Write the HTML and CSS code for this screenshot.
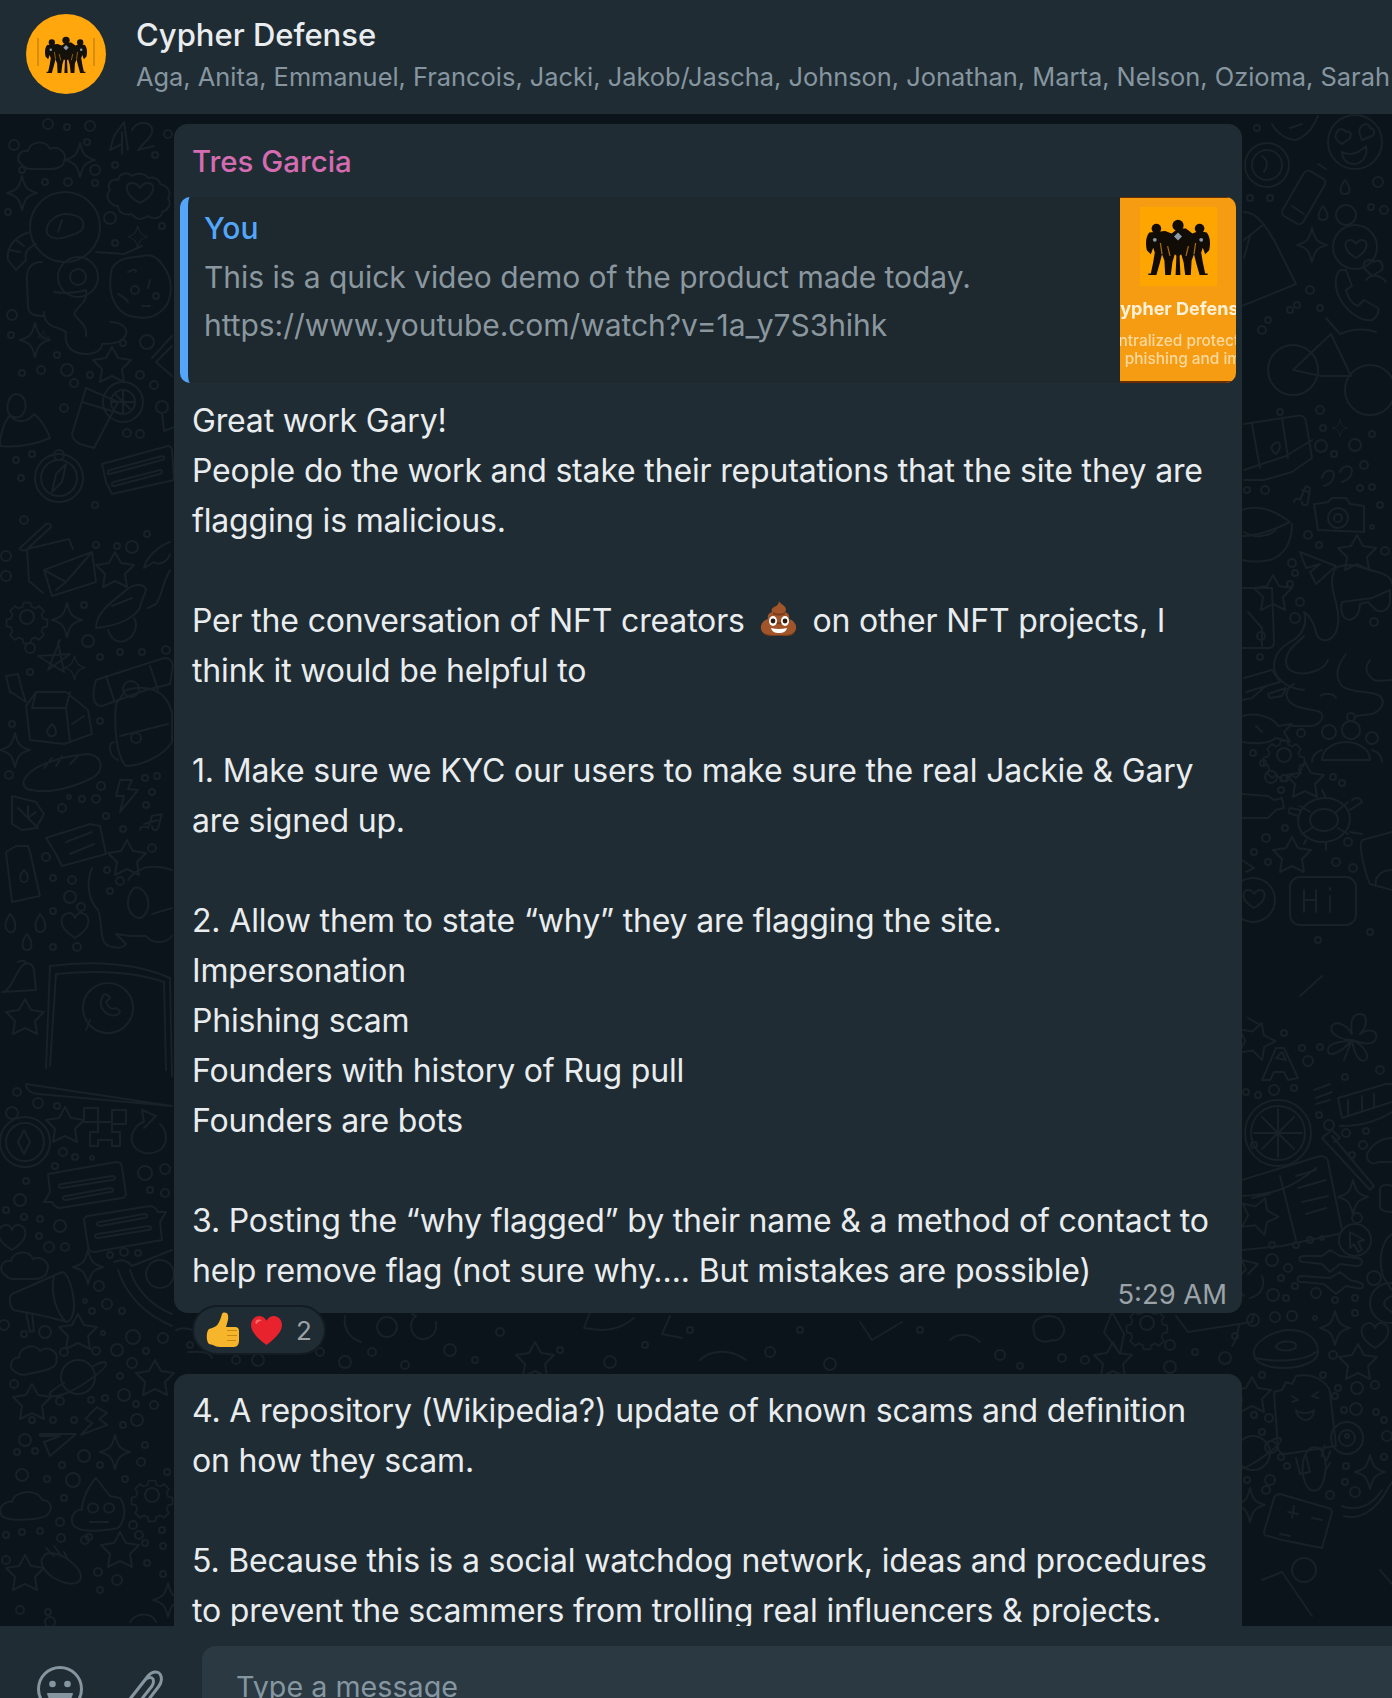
FILE: index.html
```html
<!DOCTYPE html>
<html lang="en">
<head>
    <meta charset="UTF-8">
    <title>Cypher Defense</title>
    <link rel="stylesheet" href="styles.css">
</head>
<body>
    <svg class="sprites" width="0" height="0">
        <defs>
            <symbol id="figures" viewBox="0 0 80 70">
                <g stroke-linecap="round" stroke-linejoin="round">
                    <circle cx="40" cy="8" r="7"/>
                    <circle cx="13" cy="12" r="6"/>
                    <circle cx="67" cy="12" r="6"/>
                    <path d="M4 17c-4 5-5 13-3 22l5 5 3-8 2 6-2 12-3 14H3v2h10l4-14 3-12 3 8 1 18h7l2-16 3-10 2 2-1 24h6l-1-24 2-2 3 10 2 16h7l1-18 3-8 3 12 4 14h10v-2h-3l-3-14-2-12 2-6 3 8 5-5c2-9 1-17-3-22l-10-2-8 3-8-6-10 0-8 6-8-3z"/>
                </g>
                <path d="M40 17l5 5-5 5-5-5z" fill="#8d99a6"/>
                <circle cx="11" cy="26" r="2.400" fill="#8d99a6"/>
                <circle cx="69" cy="26" r="2.400" fill="#8d99a6"/>
                <path d="M27 34l3 12M53 34l-3 12M18 30l2 14M62 30l-2 14" stroke="#a8690f" stroke-width="1.600" fill="none"/>
            </symbol>
        </defs>
    </svg>

    <div class="app">
        <header class="chat-header">
            <div class="avatar">
                <svg class="avatar-logo" viewBox="0 0 80 80">
                    <rect x="11" y="24" width="2" height="28" fill="#b97a10" opacity="0.6"/>
                    <rect x="67" y="24" width="2" height="28" fill="#b97a10" opacity="0.6"/>
                    <svg x="19" y="22" width="42" height="37"><use href="#figures"/></svg>
                </svg>
            </div>
            <div class="chat-info">
                <div class="chat-title">Cypher Defense</div>
                <div class="chat-members">Aga, Anita, Emmanuel, Francois, Jacki, Jakob/Jascha, Johnson, Jonathan, Marta, Nelson, Ozioma, Sarah</div>
            </div>
        </header>

        <main class="chat-body">
            <!-- wallpaper doodles, coordinates are page coordinates -->
            <svg class="wallpaper" width="1392" height="1512" viewBox="0 114 1392 1512">
                <defs>
                    <path id="star4" d="M0-17C3-5 5-3 15 0 5 3 3 5 0 17-3 5-5 3-15 0-5-3-3-5 0-17z"/>
                    <path id="star5" d="M0-18l6 11 13 2-9 9 2 13-12-6-12 6 2-13-9-9 13-2z"/>
                    <path id="heart" d="M0 13C-20 1-14-12-6-12c3 0 5 2 6 5 1-3 3-5 6-5 8 0 14 13-6 25z"/>
                    <path id="cloud" d="M-22 8c-8-6-2-16 6-14 2-10 18-12 22-2 8-4 18 4 14 12 0 6-8 8-14 8H-14c-4 0-6-2-8-4z"/>
                    <g id="gear">
                        <circle r="7"/>
                        <path d="M-4-17h8l1 5 5 2 4-3 6 6-3 4 2 5 5 1v8l-5 1-2 5 3 4-6 6-4-3-5 2-1 5h-8l-1-5-5-2-4 3-6-6 3-4-2-5-5-1v-8l5-1 2-5-3-4 6-6 4 3 5-2z" transform="scale(.85)"/>
                    </g>
                    <g id="bolt"><path d="M6-16h-12l-4 16 8 0-4 16 18-22-10-1z"/></g>
                    <g id="comet">
                        <path d="M-20-10c-6 6 0 16 10 22 10 6 22 8 26 2 4-8-6-16-14-22-8-4-18-8-22-2z"/>
                        <path d="M-10-10l-8-8M-4-12l-6-8M4-6l-4-8"/>
                    </g>
                    <g id="saturn">
                        <circle r="17"/>
                        <path d="M-14 6c-10 6-16 10-14 12 4 4 20-2 32-10S30-10 28-14c-2-2-8 0-14 4"/>
                    </g>
                    <g id="chatline">
                        <path d="M-38-14l68-12c4 0 6 2 6 6l4 26c0 2-2 4-4 4l-62 10c-4 0-6-2-8-6l-8 0 6-10z"/>
                        <path d="M-24-4l50-8c4 0 4 4 0 4l-50 8c-4 0-4-4 0-4zM-20 8l44-8c4 0 4 4 0 4l-44 8c-4 0-4-4 0-4z"/>
                    </g>
                </defs>

                <g class="doodle">
                    <!-- left column, helmet and food -->
                    <path d="M122 144l-12 6 4-14 10-14 4 28M122 132l0 22M132 130c4-8 16-10 20-2 2 8-8 14-14 22l16-4"/>
                    <use href="#cloud" x="44" y="157"/>
                    <use href="#star4" x="80" y="160"/>
                    <use href="#star4" x="22" y="193"/>
                    <path d="M110 190c-4-6 2-12 8-10 2-8 10-8 14-4 6-4 14-2 16 2 6-2 12 2 12 6 8 2 12 8 8 14 4 6 0 12-6 14 0 6-8 8-14 4-6 4-12 4-16-2-8 2-14-2-14-8-8 0-14-10-8-16z"/>
                    <path d="M140 203c-16-8-16-20-8-20 3 0 6 2 8 5 2-3 5-5 8-5 8 0 8 12-8 20z"/>
                    <use href="#star4" x="138" y="235" transform="translate(48 84) scale(.65)"/>

                    <circle cx="65" cy="227" r="35"/>
                    <path d="M47 233c-2-12 12-22 26-18 12 2 14 14 4 18-10 4-24 10-30 0zM62 220l-4 12"/>
                    <path d="M30 232c-14 4-24 14-22 28l8 10 10-10c-2-8 2-12 10-16M16 240l8 6M10 250l10 2"/>
                    <path d="M42 262c-12 0-16 8-15 20l1 24c0 8 6 10 16 10M54 292c12 2 26 0 32-2 2 14-8 14-12 24 4 6 14 12 12 22"/>
                    <circle cx="78" cy="277" r="20"/>
                    <circle cx="78" cy="277" r="8"/>
                    <path d="M44 312c0 8 4 14 14 16l8 4c-2 12 4 22 20 22 12 0 16-6 16-10 10 0 22-2 24-10 2-8-8-12-16-12M96 252l28 2 18-8"/>
                    <path d="M112 268c8-12 20-10 30-12 14-4 20 8 24 14 8 14 6 34-6 42-10 8-20 6-30 4-14-4-24-22-18-48z"/>
                    <path d="M128 272c4-2 8-4 8 0M150 280l-2 8M118 294c4 2 8 4 10 8M142 306h8"/>
                    <circle cx="135" cy="290" r="4"/>
                    <circle cx="156" cy="296" r="3"/>
                    <use href="#star4" x="35" y="340"/>
                    <use href="#star5" x="112" y="365"/>
                    <path d="M152 358l20-22M172 376l-16-14 16-16"/>

                    <!-- drink and person -->
                    <path d="M86 388l-14 46c0 4 4 8 8 10l14 4 24-46zM82 402l40 12"/>
                    <circle cx="123" cy="402" r="20"/>
                    <circle cx="123" cy="402" r="12"/>
                    <path d="M123 390v24M111 402h24M115 394l16 16"/>
                    <path d="M8 412c-2-8 2-18 8-18 8 0 12 10 8 18-2 6-12 8-16 0zM0 440c2-10 6-22 10-24 8 8 18 6 24-2 8 6 14 18 16 24-14 6-32 10-50 8z"/>
                    <use href="#star4" x="44" y="398" transform="translate(26 178) scale(.4)"/>
                    <circle cx="162" cy="407" r="6"/>
                    <path d="M162 413l2 18 10-4"/>

                    <!-- compass and ticket -->
                    <circle cx="59" cy="478" r="24"/>
                    <circle cx="59" cy="478" r="18"/>
                    <circle cx="59" cy="455" r="5"/>
                    <path d="M66 464l-4 18-10 10 4-18zM52 492l10-10"/>
                    <path d="M102 464l66-18c2 0 4 2 4 4l2 30-62 14-6-12zM110 470l52-14c3 0 3 3 0 4l-52 14c-3 0-3-3 0-4zM114 482l46-12c3 0 3 3 0 4l-46 12c-3 0-3-3 0-4z"/>

                    <!-- paperclip and envelope -->
                    <path d="M20 548l26-24c4-2 6 2 4 4l-24 22c-4 2-8-2-6-2z"/>
                    <path d="M43 593l-14-12-2-32 42-10 4 10"/>
                    <path d="M44 570l48-18 4 30-44 14zM44 570l22 12 26-30M56 590l10-8"/>
                    <use href="#star5" x="115" y="570"/>
                    <use href="#gear" x="27" y="617"/>
                    <use href="#star4" x="67" y="620"/>
                    <path d="M96 628c0-16 16-26 28-36 8-8 20-10 22-2-2 8-6 12-6 18-8 12-26 18-44 20zM112 606l20-8M108 630c4 12 14 16 24 6 4-6 6-12 2-18M170 542c-12 4-24 16-26 26l10-6c4 4 14 0 16-8"/>
                    <path d="M170 570c-8 14-8 26-14 34l-8 4"/>

                    <!-- small left items -->
                    <path d="M60 640l-12 30 22-16-32 2 26 16-6-30z"/>
                    <use href="#star4" x="75" y="668" transform="translate(22 200) scale(.7)"/>
                    <path d="M6 676l12-2 4 16 4 12-12-8-4-2z"/>
                    <path d="M36 692h30l22 18 4 24-28 10-34-4-4-34zM36 692l-4 16 34 0 4-16M66 708l4 34M52 724c-4 4-6 8-4 10 2 4 8 2 8-2s-2-6-4-8zM72 724l12-8"/>
                    <path d="M126 690c22-6 40 0 46 22v30c-10 16-34 24-46 24-10-10-12-40-10-62zM114 742c-6 0-6 14 4 18M120 736l48-12"/>
                    <circle cx="136" cy="738" r="5"/>
                    <path d="M96 680l68-22c8 0 10 6 8 14l-2 12-24 6-44 16c-10 0-10-12-6-26zM150 666l8 24M106 676l8 24"/>
                    <circle cx="131" cy="689" r="8"/>
                    <use href="#star4" x="15" y="750"/>
                    <path d="M24 780c8-16 40-24 64-26 16 2 16 18 4 24-20 10-44 16-60 12-6 0-10-4-8-10zM44 768l8-10M56 766l6-10M70 764l8-8"/>
                    <use href="#bolt" x="126" y="796"/>
                    <path d="M12 796l24 6 8 12-8 14-14 2-10-6zM18 808l20 20M28 806v10M36 812l-8 6"/>
                    <path d="M140 830c0-4 6-4 8-2l4-12 10-2-4 14c-2 4-6 2-6-2M144 824l14-4"/>
                    <path d="M46 838l44-14 10 2 6 28-44 12-6-12zM66 842l26-10M70 854l24-10"/>
                    <path d="M16 846h12l2 6 10 44-28 6-6-50zM24 870c-6 6-4 12 0 12s6-6 0-12z"/>
                    <use href="#star5" x="127" y="858"/>

                    <!-- dog -->
                    <path d="M92 868c-6 14-4 32 6 42 4 10 2 24 6 32 4 6 18 8 22 2l-10-10 14 2 16 0c6 8 20 8 26 0M128 880c10-14 26-16 44-10M134 888c-6 6-10 20 0 28 8 6 16-4 14-16-2-10-10-14-14-12zM152 914l20-6"/>
                    <path d="M10 914c-6 8-6 16 0 18s8-10 0-18zM40 914c-6 8-6 18 0 18 6 0 8-8 0-18zM27 934c-6 8-6 16 0 16 6 0 6-8 0-16z"/>
                    <use href="#heart" x="75" y="925"/>
                    <path d="M4 992c8-4 12-20 18-26 4-4 10-4 12 4l2 20-34 2zM18 962c2-2 8-2 8 2"/>
                    <use href="#star5" x="25" y="1017"/>

                    <!-- tablet with phone logo -->
                    <path d="M50 966c44-6 90-2 120 12l2 98M50 966l-4 102M56 974c40-4 80-2 108 8l2 88M56 974l-6 92"/>
                    <circle cx="108" cy="1008" r="25"/>
                    <path d="M86 1030l4-10M102 998c2-6 6-4 8 0l-4 4c2 6 6 8 10 6l4 3c-2 6-10 6-16 0-4-4-4-8-2-13z"/>
                    <path d="M26 1084l146 22M26 1084c0 6 6 10 12 10l134 12"/>

                    <!-- compass and pixel creature -->
                    <circle cx="25" cy="1142" r="25"/>
                    <circle cx="25" cy="1142" r="19"/>
                    <circle cx="12" cy="1113" r="6"/>
                    <path d="M24 1130l6 12-6 12-6-12z"/>
                    <use href="#star5" x="65" y="1125"/>
                    <path d="M84 1108h14v14H84zM112 1110h14v14h-14zM98 1122h14v10h8v14h-8v-6H98v6h-8v-14h8z"/>
                    <path d="M160 1124c8 8 8 20 0 26-10 6-24 4-28-8-2-8 4-18 12-20l-2-12 14 6-12 12"/>
                    <use href="#chatline" x="86" y="1188"/>
                    <use href="#chatline" x="124" y="1226" transform="translate(248 2452) scale(-1 -1)"/>
                    <use href="#heart" x="12" y="1237"/>
                    <use href="#cloud" x="27" y="1267"/>
                    <use href="#star4" x="88" y="1267"/>

                    <!-- megaphone and pizza -->
                    <path d="M12 1294l50-22c6 0 12 20 12 34 0 10-4 16-8 16-10-4-34-8-52-12-4-2-6-12-2-16zM54 1276c-4 16 2 36 12 46M26 1312l4 20 4-1-2-18"/>
                    <path d="M114 1262c10-4 14 0 18 4l40-16M118 1270c8 24 26 44 54 56M130 1270c6 20 22 36 42 44"/>
                    <circle cx="160" cy="1274" r="14"/>
                    <use href="#star5" x="78" y="1332"/>
                    <use href="#cloud" x="36" y="1360" transform="rotate(-12 36 1360)"/>
                    <use href="#saturn" x="78" y="1377"/>
                    <use href="#star5" x="32" y="1402"/>
                    <use href="#star5" x="155" y="1378"/>
                    <use href="#bolt" x="94" y="1424" transform="rotate(30 94 1424)"/>
                    <path d="M40 1434l36 0-26 22-6-14 16-6-20 0z"/>
                    <use href="#star4" x="115" y="1452"/>
                    <path d="M2 1516c-6-10 6-16 10-14 2-12 26-14 30-2 8 0 12 8 6 14-4 6-40 8-46 2z"/>
                    <path d="M96 1478l14 18 10 2c6 8 6 22-2 30-20 4-38 4-44-2-6-8 2-18 8-16 0-12 8-26 14-32zM88 1508c0-6 10-6 10 0s-10 6-10 0zM104 1508c0-6 10-6 10 0s-10 6-10 0zM90 1522l18 0"/>
                    <use href="#gear" x="152" y="1495"/>
                    <use href="#star5" x="120" y="1550"/>
                    <use href="#star5" x="25" y="1573"/>
                    <use href="#comet" x="64" y="1566"/>
                    <use href="#star4" x="168" y="1600"/>
                    <path d="M130 1622c6-10 22-10 26 0"/>

                    <!-- gap between the two bubbles -->
                    <path d="M176 1330c12-6 26 4 34 12M188 1352c8 0 20-2 24 6"/>
                    <circle cx="387" cy="1327" r="10"/>
                    <path d="M345 1316c-2 12 4 22 16 26M590 1312l-6 16c14 2 30 6 50-10"/>
                    <path d="M436 1322c2 12-8 20-18 16-10-6-8-18-2-22l-4-2"/>
                    <path d="M700 1360c10-10 30-12 46 0M670 1316l-8 18 20 4"/>
                    <use href="#star5" x="535" y="1360"/>
                    <use href="#star5" x="1113" y="1360"/>
                    <use href="#gear" x="1147" y="1323"/>
                    <path d="M1040 1318c8-4 20-2 22 6 6 8-2 18-10 16-8 4-18 0-18-8-2-6 0-12 6-14zM1112 1312l-8 20 16 22 4-20zM1176 1316l12 16 64-10 2-8"/>
                    <path d="M1240 1324c-4 6 0 12-8 22"/>
                    <path d="M860 1322l12 18 30-18M950 1340c8-8 22-6 30 2"/>

                    <!-- right column, top -->
                    <circle cx="1267" cy="165" r="22"/>
                    <circle cx="1267" cy="165" r="15"/>
                    <path d="M1262 156c6 4 6 10 2 16"/>
                    <path d="M1272 124c4 8 14 16 24 16 10-4 16-10 22-24M1290 128l12-4"/>
                    <circle cx="1355" cy="142" r="27"/>
                    <path d="M1336 134c2-6 8-6 10-2 4-2 6 2 4 6l-8 6c-4-2-8-6-6-10zM1360 128c4-6 10-4 10 0 4 0 6 6 2 8l-10 4c-2-4-4-8-2-12zM1342 152c8 4 16 2 24-6 2 10-4 18-12 18-8 0-12-6-12-12z"/>
                    <rect x="1292" y="172" width="24" height="52" rx="5" transform="rotate(30 1305 197)"/>
                    <path d="M1318 164l8 5M1304 214l-12-8"/>
                    <path d="M1345 180c-6 8-6 14 0 14s6-6 0-14zM1323 206c-6 8-6 14 0 14s6-6 0-14z"/>
                    <circle cx="1346" cy="215" r="10"/>
                    <use href="#star4" x="1312" y="245"/>
                    <circle cx="1355" cy="247" r="22"/>
                    <path d="M1356 258c-14-8-12-18-6-18 3 0 5 2 6 4 2-3 4-4 6-4 6 0 8 10-6 18z"/>
                    <path d="M1244 212c10 0 18 8 30 28l22 44-54 22M1244 240l20-16M1250 236l-6 22"/>
                    <path d="M1340 270c-6 6-6 20 2 32 6 10 20 20 30 18 4-2 8-8 6-12l-14-8-6 6c-6-2-10-8-12-16l6-4-6-16zM1366 280c4-6 14-6 20 2M1364 268c-2-8 6-10 10-6 6-4 10 2 8 8l-10 6z"/>
                    <circle cx="1293" cy="370" r="25"/>
                    <circle cx="1370" cy="390" r="25"/>
                    <path d="M1293 370l38-36 20 42h-30l-28-6zM1326 318l14 16c10-4 24-6 36-2"/>

                    <!-- right column, map to plane -->
                    <path d="M1244 424l52-8c6-2 10 2 10 6l6 36-20 14-28 8-20 0M1252 424l8 44M1282 418l6 40M1244 470l42-14 26-16"/>
                    <path d="M1272 446c4-6 8-4 8 0 0 4-4 8-4 8s-6-4-4-8z"/>
                    <use href="#star4" x="1340" y="428" transform="translate(670 214) scale(.5)"/>
                    <path d="M1322 478c2-8 10-10 12-4 0 6-4 10-10 12M1340 472c2-6 10-8 12-2 0 6-4 10-10 12"/>
                    <path d="M1294 502c0-4 6-4 6-2l6-14 4 2-2 14c0 4-6 4-6 0M1302 490l6 2"/>
                    <path d="M1242 510c16-6 32 0 48 12-16 8-34 14-48 14M1292 524c0 18-8 32-22 36-10 2-20 2-28 0"/>
                    <path d="M1244 532c10 6 22 6 32-2"/>
                    <path d="M1316 504l12-2 4-4h14l4 6 14 2v26l-46-2-4-26z"/>
                    <circle cx="1338" cy="518" r="10"/>
                    <circle cx="1338" cy="518" r="4"/>
                    <use href="#star5" x="1357" y="553"/>
                    <path d="M1300 552l36 14-20 18-6-12 10-8-14 4z"/>

                    <!-- wand, creature and glasses -->
                    <use href="#star5" x="1273" y="593"/>
                    <path d="M1242 588h30l2 54c0 4-2 6-6 6h-26M1248 612l14 16 0 18"/>
                    <circle cx="1261" cy="636" r="4"/>
                    <path d="M1336 568c10-6 22-2 34 2 10 2 22 6 22 14M1336 568c-6 8-4 22 0 34 2 10 4 20 0 30-6 12-18 10-20 0-2-10-8-18-12-20 4 12-2 24-14 30-10 6-16 14-16 24 0 10 10 22 30 24"/>
                    <path d="M1304 636c-8 8-18 14-18 26 0 10 14 14 26 10 8-2 14-6 16-12"/>
                    <path d="M1342 602l30-4 18-8v10c0 8-6 14-14 10l-8-8-8 2c0 10-4 14-10 16-8 0-10-10-8-18z"/>
                    <path d="M1346 654c-8 10-12 22-4 32 10 8 30 4 38 10 6 6 2 14-8 18l-16 2M1370 660c-6 8-4 14 4 20 6 2 14 0 18 0"/>
                    <path d="M1294 684c-8 4-10 12-4 18 8 8 20 6 30 10 6 4 0 14-10 14l-18 0M1320 696c6-4 14-2 16 2"/>
                    <path d="M1244 678l28-8 8 12-14 4-14 12-10 2M1246 692l20-6M1268 694l12-4 6-2-4 8-12 2z"/>
                    <path d="M1242 716c12-4 30 0 36 10l14-2-8 8 6 10-14-4c-8 6-22 6-34 4M1256 726l6 6"/>
                    <path d="M1322 732a7 7 0 1 1 0 .1M1366 738a6 6 0 1 1 0 .1M1342 730a9 9 0 1 1 0 .1M1322 760c0-12 14-18 24-18s24 6 24 18zM1312 762c0-6 4-10 10-12M1382 762c0-6-4-10-10-12"/>
                    <use href="#gear" x="1284" y="755"/>
                    <use href="#star5" x="1305" y="780"/>

                    <!-- turtle, note, smile -->
                    <ellipse cx="1324" cy="820" rx="26" ry="22" transform="rotate(-8 1324 820)"/>
                    <ellipse cx="1324" cy="820" rx="14" ry="11"/>
                    <path d="M1300 810l-10-2c-2 2-2 6 2 6l6 2M1350 810l12-8c-2-6-8-4-10-2M1326 798l-4-8M1350 832l12 2M1306 840l-2 4M1326 842l0 8M1310 812l-10-6M1336 812l12-10M1312 828l-10 6M1338 828l10 6"/>
                    <path d="M1242 794l26 2 6 4 8-2 2 10-8 2-8 8-26 0"/>
                    <path d="M1362 840l30-8M1362 840c-4 6 4 36 8 44l22 6"/>
                    <path d="M1392 870c-12 0-18 8-16 16"/>
                    <use href="#star5" x="1292" y="855"/>
                    <path d="M1242 860l12 8-8 4"/>
                    <rect x="1290" y="877" width="66" height="48" rx="10"/>
                    <path d="M1304 890v22M1316 890v22M1304 900h12M1330 896v16M1330 888v2"/>
                    <circle cx="1253" cy="900" r="22"/>
                    <path d="M1254 908c-14-8-12-18-6-18 3 0 5 2 6 4 2-3 4-4 6-4 6 0 8 10-6 18z"/>

                    <!-- right column, lower part -->
                    <use href="#star5" x="1256" y="1040" transform="rotate(18 1256 1040)"/>
                    <path d="M1248 1018l14 8M1300 996l22-20M1262 1080l14-32 8 0 14 30-10 2-4-8-10 0-4 8zM1276 1058l6-6 4 8z"/>
                    <path d="M1344 1060l8-20M1352 1040c-10 0-24-6-20-14 4-6 14-2 20 8-2-12 0-20 8-20 8 0 8 12 0 20 8-6 18-4 16 4-2 8-12 6-24 2zM1352 1040c-10 2-24 2-24 10 0 8 12 4 24-10zM1352 1040c10 4 18 14 14 20-6 4-12-6-14-20z"/>
                    <circle cx="1278" cy="1133" r="33"/>
                    <circle cx="1278" cy="1133" r="27"/>
                    <path d="M1278 1133v-24M1278 1133v24M1278 1133h-24M1278 1133h24M1278 1133l-16-16M1278 1133l16-16M1278 1133l-16 16M1278 1133l16 16"/>
                    <path d="M1314 1090l16-6M1316 1098l16-6M1316 1104l14-4"/>
                    <path d="M1338 1098l48-14h6M1338 1098l4 20 50-16M1340 1126c16 0 36-4 52-14M1348 1100v14M1362 1096v14M1374 1094v14"/>
                    <path d="M1322 1138l48 52 4-4-42-50M1322 1138l10-8 8 8-6 4"/>
                    <path d="M1392 1138c-12 0-20 8-24 14-4 8 4 14 10 10l14 0"/>
                    <path d="M1392 1186c-4-2-12-2-12 4v16c0 6 8 6 12 6"/>

                    <path d="M1242 1180l78-24c4 0 8 2 8 6l14 68c0 2-2 4-4 4l-56 12-40 4M1280 1176l16 64M1242 1196c30-2 48-6 74-28M1252 1198l18-4M1296 1176l20-6M1298 1188l28-8M1302 1202l26-6M1306 1214l20-6"/>
                    <use href="#star5" x="1259" y="1215" transform="rotate(20 1259 1215)"/>
                    <use href="#star4" x="1353" y="1197"/>
                    <circle cx="1355" cy="1240" r="16"/>
                    <path d="M1350 1232l14 8-6 2 4 8-4 2-4-8-4 4z"/>
                    <path d="M1304 1256l18 0 8-6 10 6 16 2c8 0 8 8 0 8l-16-2-10 8-8-8-18-2c-6 0-6-6 0-6zM1302 1276l28 2 10-6 10 8 8 2c8 2 6 8-2 6l-10-2-10 8-12-10-22-2c-6 0-6-6 0-6z"/>
                    <path d="M1244 1296c-8-6-6-22 2-26l-4-10 16 4-10 10M1262 1276c4 10-2 20-12 22"/>
                    <path d="M1392 1234c-12 8-14 30-8 44 4 6 6 10 8 12"/>
                    <circle cx="1390" cy="1303" r="20"/>
                    <path d="M1392 1296c-6 2-8 6-8 8s4 6 8 8"/>
                    <use href="#star4" x="1335" y="1328"/>
                    <path d="M1254 1354c-2-12 20-24 36-24 18 0 28 10 28 22 0 10-18 16-34 16-14 0-30-4-30-14zM1256 1358c16 4 48 4 60-6M1276 1346c4-6 20-6 20 0 0 6-20 6-20 0z"/>
                    <use href="#heart" x="1375" y="1335"/>
                    <use href="#star5" x="1358" y="1362"/>
                    <use href="#star5" x="1252" y="1395"/>

                    <!-- popsicle, eye, saturn -->
                    <path d="M1274 1392l8-2 4-8 6 2 4-8c20-4 32 8 34 16l6 54-50 8c-4 0-8-2-8-6zM1296 1458l4 16 10-2-4-16"/>
                    <path d="M1292 1396l6 4-6 2M1318 1392l-6 4 6 2M1296 1410c4 4 14 4 18 0 0 6-4 10-8 10s-10-4-10-10z"/>
                    <circle cx="1347" cy="1438" r="16"/>
                    <circle cx="1347" cy="1438" r="8"/>
                    <circle cx="1347" cy="1436" r="2"/>
                    <use href="#saturn" x="1253" y="1453"/>
                    <use href="#comet" x="1318" y="1470" transform="rotate(60 1318 1470)"/>
                    <use href="#star4" x="1370" y="1472"/>
                    <path d="M1344 1516c14 4 32-4 44-28l4-6M1342 1506c14 6 30 0 40-16"/>
                    <use href="#star4" x="1250" y="1505"/>
                    <path d="M1280 1494l48 14c2 0 4 2 4 4l-10 36-40-8-14-4c-4 0-4-2-4-4l10-34c0-2 4-4 6-4zM1288 1512l10 2M1294 1506l-2 12M1312 1518l10 2M1280 1534l10 2"/>
                    <circle cx="1304" cy="1570" r="12"/>
                    <path d="M1262 1580l20-8 30 44M1380 1570l12 14"/>
                </g>

                <!-- scattered dots -->
                <g class="doodle">
                    <circle cx="48" cy="124" r="5"/><circle cx="67" cy="127" r="3"/><circle cx="90" cy="126" r="5"/>
                    <circle cx="14" cy="145" r="5"/><circle cx="87" cy="142" r="3"/><circle cx="22" cy="170" r="3"/>
                    <circle cx="45" cy="182" r="3"/><circle cx="68" cy="182" r="4"/><circle cx="95" cy="170" r="5"/>
                    <circle cx="95" cy="183" r="3"/><circle cx="115" cy="165" r="3"/><circle cx="155" cy="155" r="3"/>
                    <circle cx="168" cy="134" r="4"/><circle cx="8" cy="212" r="3"/><circle cx="110" cy="218" r="6"/>
                    <circle cx="115" cy="243" r="3"/><circle cx="162" cy="226" r="3"/><circle cx="12" cy="315" r="5"/>
                    <circle cx="11" cy="335" r="3"/><circle cx="147" cy="342" r="7"/><circle cx="123" cy="343" r="3"/>
                    <circle cx="57" cy="355" r="3"/><circle cx="22" cy="373" r="3"/><circle cx="41" cy="370" r="4"/>
                    <circle cx="67" cy="370" r="6"/><circle cx="90" cy="375" r="3"/><circle cx="74" cy="383" r="4"/>
                    <circle cx="140" cy="375" r="4"/><circle cx="154" cy="385" r="4"/><circle cx="64" cy="408" r="4"/>
                    <circle cx="127" cy="433" r="4"/><circle cx="140" cy="434" r="4"/><circle cx="16" cy="460" r="3"/>
                    <circle cx="32" cy="454" r="3"/><circle cx="21" cy="478" r="3"/><circle cx="95" cy="505" r="3"/>
                    <circle cx="24" cy="520" r="4"/><circle cx="6" cy="556" r="5"/><circle cx="6" cy="576" r="5"/>
                    <circle cx="96" cy="545" r="3"/><circle cx="117" cy="546" r="3"/><circle cx="132" cy="547" r="6"/>
                    <circle cx="147" cy="534" r="3"/><circle cx="84" cy="605" r="3"/><circle cx="88" cy="641" r="6"/>
                    <circle cx="30" cy="648" r="5"/><circle cx="100" cy="657" r="3"/><circle cx="120" cy="652" r="3"/>
                    <circle cx="142" cy="652" r="3"/><circle cx="166" cy="650" r="4"/><circle cx="30" cy="672" r="3"/>
                    <circle cx="12" cy="724" r="3"/><circle cx="100" cy="721" r="3"/><circle cx="9" cy="775" r="4"/>
                    <circle cx="101" cy="786" r="4"/><circle cx="145" cy="778" r="3"/><circle cx="157" cy="776" r="3"/>
                    <circle cx="152" cy="792" r="3"/><circle cx="146" cy="805" r="3"/><circle cx="69" cy="797" r="2"/>
                    <circle cx="82" cy="799" r="3"/><circle cx="96" cy="799" r="4"/><circle cx="62" cy="808" r="4"/>
                    <circle cx="106" cy="816" r="3"/><circle cx="123" cy="829" r="3"/><circle cx="152" cy="848" r="4"/>
                    <circle cx="46" cy="857" r="4"/><circle cx="53" cy="878" r="3"/><circle cx="72" cy="880" r="4"/>
                    <circle cx="107" cy="870" r="3"/><circle cx="120" cy="881" r="4"/><circle cx="110" cy="891" r="3"/>
                    <circle cx="70" cy="897" r="6"/><circle cx="81" cy="907" r="4"/><circle cx="53" cy="911" r="3"/>
                    <circle cx="53" cy="947" r="3"/><circle cx="77" cy="947" r="4"/>
                    <circle cx="17" cy="1092" r="4"/><circle cx="38" cy="1103" r="5"/><circle cx="57" cy="1106" r="3"/>
                    <circle cx="63" cy="1152" r="4"/><circle cx="75" cy="1157" r="3"/><circle cx="92" cy="1158" r="2"/>
                    <circle cx="55" cy="1166" r="3"/><circle cx="145" cy="1173" r="7"/><circle cx="165" cy="1169" r="5"/>
                    <circle cx="150" cy="1190" r="3"/><circle cx="165" cy="1193" r="4"/><circle cx="26" cy="1181" r="3"/>
                    <circle cx="20" cy="1200" r="6"/><circle cx="6" cy="1210" r="3"/><circle cx="24" cy="1217" r="3"/>
                    <circle cx="40" cy="1219" r="3"/><circle cx="60" cy="1226" r="6"/><circle cx="39" cy="1236" r="3"/>
                    <circle cx="49" cy="1247" r="5"/><circle cx="65" cy="1247" r="4"/><circle cx="110" cy="1255" r="3"/>
                    <circle cx="124" cy="1252" r="4"/><circle cx="138" cy="1253" r="3"/><circle cx="99" cy="1286" r="5"/>
                    <circle cx="85" cy="1301" r="2"/><circle cx="92" cy="1311" r="3"/><circle cx="107" cy="1304" r="5"/>
                    <circle cx="122" cy="1311" r="3"/><circle cx="4" cy="1325" r="5"/><circle cx="24" cy="1334" r="3"/>
                    <circle cx="45" cy="1332" r="6"/><circle cx="103" cy="1333" r="2"/><circle cx="133" cy="1337" r="7"/>
                    <circle cx="163" cy="1338" r="5"/><circle cx="64" cy="1352" r="4"/><circle cx="96" cy="1351" r="4"/>
                    <circle cx="117" cy="1350" r="6"/><circle cx="146" cy="1351" r="3"/><circle cx="132" cy="1363" r="5"/>
                    <circle cx="120" cy="1376" r="3"/><circle cx="14" cy="1384" r="4"/><circle cx="60" cy="1401" r="4"/>
                    <circle cx="91" cy="1400" r="3"/><circle cx="105" cy="1398" r="3"/><circle cx="124" cy="1395" r="6"/>
                    <circle cx="136" cy="1404" r="3"/><circle cx="154" cy="1405" r="4"/><circle cx="137" cy="1420" r="6"/>
                    <circle cx="123" cy="1425" r="3"/><circle cx="32" cy="1420" r="3"/><circle cx="53" cy="1420" r="3"/>
                    <circle cx="74" cy="1420" r="3"/><circle cx="25" cy="1440" r="6"/><circle cx="17" cy="1452" r="3"/>
                    <circle cx="35" cy="1451" r="3"/><circle cx="145" cy="1445" r="3"/><circle cx="141" cy="1462" r="4"/>
                    <circle cx="84" cy="1456" r="6"/><circle cx="62" cy="1465" r="3"/><circle cx="100" cy="1465" r="3"/>
                    <circle cx="167" cy="1472" r="3"/><circle cx="22" cy="1475" r="6"/><circle cx="47" cy="1479" r="3"/>
                    <circle cx="73" cy="1480" r="7"/><circle cx="125" cy="1479" r="3"/><circle cx="64" cy="1498" r="3"/>
                    <circle cx="6" cy="1535" r="3"/><circle cx="22" cy="1532" r="3"/><circle cx="40" cy="1531" r="3"/>
                    <circle cx="60" cy="1522" r="4"/><circle cx="61" cy="1538" r="4"/><circle cx="89" cy="1537" r="3"/>
                    <circle cx="133" cy="1525" r="4"/><circle cx="139" cy="1535" r="4"/><circle cx="145" cy="1543" r="3"/>
                    <circle cx="162" cy="1530" r="3"/><circle cx="163" cy="1546" r="3"/><circle cx="6" cy="1560" r="4"/>
                    <circle cx="85" cy="1540" r="4"/><circle cx="98" cy="1572" r="4"/><circle cx="117" cy="1580" r="5"/>
                    <circle cx="147" cy="1563" r="3"/><circle cx="163" cy="1574" r="3"/><circle cx="100" cy="1590" r="3"/>
                    <circle cx="50" cy="1622" r="5"/><circle cx="48" cy="1612" r="3"/><circle cx="20" cy="1610" r="4"/>

                    <!-- gap dots -->
                    <circle cx="190" cy="1345" r="3"/><circle cx="236" cy="1360" r="4"/><circle cx="258" cy="1360" r="6"/>
                    <circle cx="290" cy="1335" r="3"/><circle cx="320" cy="1352" r="4"/><circle cx="345" cy="1362" r="6"/>
                    <circle cx="372" cy="1352" r="4"/><circle cx="405" cy="1365" r="4"/><circle cx="450" cy="1350" r="6"/>
                    <circle cx="475" cy="1360" r="3"/><circle cx="500" cy="1332" r="4"/><circle cx="560" cy="1350" r="3"/>
                    <circle cx="610" cy="1362" r="6"/><circle cx="645" cy="1345" r="3"/><circle cx="690" cy="1330" r="3"/>
                    <circle cx="770" cy="1352" r="5"/><circle cx="800" cy="1330" r="3"/><circle cx="830" cy="1364" r="6"/>
                    <circle cx="920" cy="1330" r="3"/><circle cx="1000" cy="1355" r="5"/><circle cx="1020" cy="1366" r="3"/>
                    <circle cx="1062" cy="1358" r="4"/><circle cx="1085" cy="1360" r="4"/><circle cx="1170" cy="1345" r="5"/>
                    <circle cx="1170" cy="1367" r="6"/><circle cx="1195" cy="1352" r="3"/><circle cx="1225" cy="1358" r="6"/>
                    <circle cx="1235" cy="1336" r="3"/>

                    <!-- right column dots -->
                    <circle cx="1257" cy="128" r="3"/><circle cx="1250" cy="198" r="3"/><circle cx="1270" cy="198" r="3"/>
                    <circle cx="1378" cy="182" r="5"/><circle cx="1371" cy="207" r="3"/><circle cx="1384" cy="210" r="4"/>
                    <circle cx="1310" cy="290" r="4"/><circle cx="1297" cy="305" r="3"/><circle cx="1320" cy="308" r="3"/>
                    <circle cx="1268" cy="320" r="3"/><circle cx="1290" cy="310" r="3"/><circle cx="1262" cy="330" r="4"/>
                    <circle cx="1280" cy="412" r="3"/><circle cx="1320" cy="410" r="4"/><circle cx="1323" cy="428" r="3"/>
                    <circle cx="1321" cy="446" r="6"/><circle cx="1334" cy="454" r="3"/><circle cx="1355" cy="445" r="6"/>
                    <circle cx="1364" cy="465" r="4"/><circle cx="1372" cy="434" r="3"/><circle cx="1247" cy="490" r="3"/>
                    <circle cx="1265" cy="490" r="4"/><circle cx="1360" cy="488" r="3"/><circle cx="1372" cy="487" r="3"/>
                    <circle cx="1380" cy="505" r="3"/><circle cx="1372" cy="527" r="2"/><circle cx="1308" cy="535" r="4"/>
                    <circle cx="1319" cy="545" r="3"/><circle cx="1385" cy="551" r="4"/><circle cx="1292" cy="563" r="4"/>
                    <circle cx="1295" cy="573" r="3"/><circle cx="1290" cy="584" r="3"/><circle cx="1300" cy="602" r="4"/>
                    <circle cx="1295" cy="618" r="5"/><circle cx="1374" cy="622" r="4"/><circle cx="1260" cy="657" r="3"/>
                    <circle cx="1351" cy="717" r="4"/><circle cx="1301" cy="733" r="4"/><circle cx="1253" cy="753" r="3"/>
                    <circle cx="1263" cy="763" r="3"/><circle cx="1271" cy="777" r="6"/><circle cx="1284" cy="778" r="3"/>
                    <circle cx="1281" cy="790" r="3"/><circle cx="1333" cy="777" r="3"/><circle cx="1342" cy="783" r="3"/>
                    <circle cx="1285" cy="828" r="3"/><circle cx="1266" cy="838" r="4"/><circle cx="1254" cy="852" r="3"/>
                    <circle cx="1268" cy="862" r="3"/><circle cx="1348" cy="842" r="4"/><circle cx="1336" cy="862" r="4"/>
                    <circle cx="1353" cy="868" r="4"/><circle cx="1370" cy="932" r="3"/><circle cx="1318" cy="940" r="3"/>
                    <circle cx="1284" cy="1033" r="3"/><circle cx="1302" cy="1048" r="3"/><circle cx="1320" cy="1047" r="3"/>
                    <circle cx="1308" cy="1061" r="5"/><circle cx="1380" cy="1070" r="4"/><circle cx="1345" cy="1077" r="3"/>
                    <circle cx="1246" cy="1092" r="3"/><circle cx="1258" cy="1095" r="3"/><circle cx="1274" cy="1090" r="5"/>
                    <circle cx="1294" cy="1088" r="3"/><circle cx="1319" cy="1115" r="3"/><circle cx="1329" cy="1125" r="5"/>
                    <circle cx="1346" cy="1133" r="4"/><circle cx="1366" cy="1131" r="3"/><circle cx="1363" cy="1145" r="4"/>
                    <circle cx="1352" cy="1155" r="3"/><circle cx="1357" cy="1218" r="5"/><circle cx="1254" cy="1145" r="3"/>
                    <circle cx="1310" cy="1240" r="3"/><circle cx="1322" cy="1238" r="2"/><circle cx="1272" cy="1245" r="3"/>
                    <circle cx="1296" cy="1245" r="3"/><circle cx="1272" cy="1260" r="6"/><circle cx="1288" cy="1268" r="4"/>
                    <circle cx="1281" cy="1278" r="3"/><circle cx="1295" cy="1286" r="3"/><circle cx="1273" cy="1295" r="6"/>
                    <circle cx="1286" cy="1298" r="3"/><circle cx="1316" cy="1293" r="5"/><circle cx="1374" cy="1278" r="7"/>
                    <circle cx="1335" cy="1300" r="3"/><circle cx="1355" cy="1298" r="3"/><circle cx="1355" cy="1313" r="3"/>
                    <circle cx="1253" cy="1320" r="6"/><circle cx="1275" cy="1317" r="5"/><circle cx="1292" cy="1316" r="5"/>
                    <circle cx="1315" cy="1318" r="2"/><circle cx="1333" cy="1355" r="4"/><circle cx="1262" cy="1375" r="3"/>
                    <circle cx="1323" cy="1375" r="3"/><circle cx="1338" cy="1388" r="3"/><circle cx="1357" cy="1388" r="6"/>
                    <circle cx="1375" cy="1385" r="4"/><circle cx="1335" cy="1396" r="3"/><circle cx="1344" cy="1410" r="3"/>
                    <circle cx="1356" cy="1409" r="6"/><circle cx="1376" cy="1412" r="3"/><circle cx="1384" cy="1420" r="3"/>
                    <circle cx="1387" cy="1436" r="5"/><circle cx="1269" cy="1418" r="4"/><circle cx="1254" cy="1415" r="3"/>
                    <circle cx="1262" cy="1432" r="3"/><circle cx="1271" cy="1447" r="6"/><circle cx="1281" cy="1457" r="3"/>
                    <circle cx="1287" cy="1466" r="3"/><circle cx="1270" cy="1480" r="5"/><circle cx="1247" cy="1480" r="3"/>
                    <circle cx="1346" cy="1466" r="3"/><circle cx="1345" cy="1482" r="3"/><circle cx="1355" cy="1492" r="5"/>
                    <circle cx="1330" cy="1495" r="4"/><circle cx="1384" cy="1457" r="3"/><circle cx="1266" cy="1490" r="4"/>
                </g>
            </svg>

            <article class="bubble bubble-first">
                <div class="sender">Tres Garcia</div>
                <div class="quote">
                    <div class="quote-text">
                        <div class="quote-author">You</div>
                        <div class="quote-line">This is a quick video demo of the product made today.</div>
                        <div class="quote-line">https://www.youtube.com/watch?v=1a_y7S3hihk</div>
                    </div>
                    <div class="quote-thumb">
                        <div class="thumb-logo">
                            <svg class="thumb-figures"><use href="#figures"/></svg>
                        </div>
                        <div class="thumb-title">Cypher Defense</div>
                        <div class="thumb-sub">Decentralized protection</div>
                        <div class="thumb-sub">scams, phishing and impers</div>
                    </div>
                </div>
                <div class="message">
                    Great work Gary!<br>
                    People do the work and stake their reputations that the site they are<br>
                    flagging is malicious.<br>
                    <br>
                    Per the conversation of NFT creators
                    <svg class="emoji-poop" viewBox="0 0 36 36">
                        <path fill="#a0552a" d="M18 1c1 3 6 4 7 8 0 2-1 3-1 3 3 1 5 3 4 7 4 1 8 5 7 10-1 4-5 6-9 6H9c-5 0-8-2-9-6-1-5 3-9 7-10-1-4 1-6 4-7-1-2 0-4 2-5 3-1 5-3 5-6z"/>
                        <path fill="#7a3d1c" d="M2 33c8 3 24 3 32 0-2 2-5 3-7 3H9c-3 0-5-1-7-3zM8 20c6 3 14 3 20-1l1 2c-6 4-15 4-21 1zM12 12c4 2 9 2 12 0v2c-3 2-8 2-12 0z"/>
                        <ellipse cx="12" cy="21" rx="4" ry="5" fill="#fff"/>
                        <ellipse cx="24" cy="21" rx="4" ry="5" fill="#fff"/>
                        <circle cx="12" cy="21" r="2.400" fill="#2b1a10"/>
                        <circle cx="24" cy="21" r="2.400" fill="#2b1a10"/>
                        <path fill="#fff" d="M10 28c5 1.400 11 1.400 16 0-1 4-4 5-8 5s-7-1-8-5z"/>
                    </svg>
                    on other NFT projects, I<br>
                    think it would be helpful to<br>
                    <br>
                    1. Make sure we KYC our users to make sure the real Jackie &amp; Gary<br>
                    are signed up.<br>
                    <br>
                    2. Allow them to state “why” they are flagging the site.<br>
                    Impersonation<br>
                    Phishing scam<br>
                    Founders with history of Rug pull<br>
                    Founders are bots<br>
                    <br>
                    3. Posting the “why flagged” by their name &amp; a method of contact to<br>
                    help remove flag (not sure why…. But mistakes are possible)
                </div>
                <span class="time">5:29 AM</span>
            </article>

            <div class="reactions">
                <svg class="emoji-thumb" viewBox="0 0 34 36">
                    <path fill="#f7b52b" d="M3 17c3-1 7-2 9-5 2-3 3-7 4-10 1-2 5-2 6 1 1 4-1 8-2 12h9c3 0 4 2 4 4v10c0 3-2 6-5 6H14c-3 0-5-1-7-2l-4-1c-3-2-3-13 0-15z"/>
                    <path fill="#c98a14" d="M21 18h10v1H21zM21 23h10v1H21zM21 28h9v1h-9z"/>
                </svg>
                <svg class="emoji-heart" viewBox="0 0 32 30">
                    <path fill="#e8232e" d="M16 30C4 21 0 15 0 9c0-5 4-9 8.500-9 3 0 6 2 7.500 5 1.500-3 4.500-5 7.500-5C28 0 32 4 32 9c0 6-4 12-16 21z"/>
                    <path fill="#ff6b6b" d="M5 5c2-2 5-2 6 0-2 0-4 1-5 3-1 1-2-1-1-3z"/>
                </svg>
                <span class="reaction-count">2</span>
            </div>

            <article class="bubble bubble-second">
                <div class="message">
                    4. A repository (Wikipedia?) update of known scams and definition<br>
                    on how they scam.<br>
                    <br>
                    5. Because this is a social watchdog network, ideas and procedures<br>
                    to prevent the scammers from trolling real influencers &amp; projects.
                </div>
            </article>
        </main>

        <footer class="composer">
            <svg class="composer-icon smile" viewBox="0 0 46 46">
                <circle cx="23" cy="23" r="21.500" fill="none" stroke="#8696a0" stroke-width="3"/>
                <circle cx="15.500" cy="18" r="3.300" fill="#8696a0"/>
                <circle cx="30.500" cy="18" r="3.300" fill="#8696a0"/>
                <path d="M10 27h26c-1 7-6 11-13 11s-12-4-13-11z" fill="#8696a0"/>
            </svg>
            <svg class="composer-icon clip" viewBox="0 0 40 46">
                <path d="M3 34L25 6c4-5 10-5 12-2s2 8-1 12L17 41c-4 5-10 5-13 3s-3-7 0-11L22 10c2-2 5-3 7-2s2 5 0 8L14 35" fill="none" stroke="#8696a0" stroke-width="3" stroke-linecap="round"/>
            </svg>
            <div class="message-input">Type a message</div>
        </footer>
    </div>
</body>
</html>
```

FILE: styles.css
```css
body {
    margin: 0;
    background-color: #0b141a;
    font-family: Inter, "Noto Sans", sans-serif;
}

.sprites {
    position: absolute;
}

.app {
    display: flex;
    flex-direction: column;
    width: 1392px;
    height: 1698px;
    overflow: hidden;
}

.chat-header {
    display: flex;
    flex: none;
    align-items: flex-start;
    gap: 30px;
    box-sizing: border-box;
    height: 114px;
    padding: 14px 0 0 26px;
    background-color: #202c33;
}

.avatar {
    flex: none;
    width: 80px;
    height: 80px;
    border-radius: 50%;
    background-color: #ffa70d;
}

.avatar-logo {
    display: block;
    width: 80px;
    height: 80px;
    fill: #14100a;
}

.chat-info {
    min-width: 0;
    padding-top: 1px;
    white-space: nowrap;
}

.chat-title {
    color: #e9edef;
    font-size: 31px;
    font-weight: 500;
    line-height: 40px;
}

.chat-members {
    margin-top: 4px;
    color: #8696a0;
    font-size: 25.400px;
    line-height: 36px;
}

.chat-body {
    position: relative;
    flex: 1;
    min-height: 0;
    padding: 10px 0 0 174px;
    overflow: hidden;
}

.wallpaper {
    position: absolute;
    top: 0;
    left: 0;
}

.doodle {
    fill: none;
    stroke: #172127;
    stroke-width: 2;
    stroke-linecap: round;
    stroke-linejoin: round;
}

.bubble {
    position: relative;
    box-sizing: border-box;
    width: 1068px;
    border-radius: 14px;
    background-color: #202c33;
    color: #e9edef;
}

.bubble-first {
    height: 1189px;
    padding: 0 6px;
}

.bubble-second {
    margin-top: 19px;
    padding: 12px 6px 20px;
}

.sender {
    height: 73px;
    padding-left: 12px;
    color: #d56cb1;
    font-size: 29.400px;
    font-weight: 500;
    line-height: 76px;
}

.quote {
    display: flex;
    justify-content: space-between;
    height: 186px;
    border-left: 8px solid #53a6fa;
    border-radius: 10px;
    overflow: hidden;
    background-color: #1d282f;
}

.quote-text {
    padding: 8px 0 0 16px;
    white-space: nowrap;
}

.quote-author {
    color: #53a6fa;
    font-size: 30px;
    font-weight: 500;
    line-height: 46px;
}

.quote-line {
    position: relative;
    top: 2px;
    color: #8b979e;
    font-size: 30px;
    letter-spacing: -0.05px;
    line-height: 48px;
}

.quote-thumb {
    flex: none;
    box-sizing: border-box;
    width: 116px;
    border-top: 1px solid #6b2c00;
    border-bottom: 2px solid #6b2c00;
    background-color: #f59c12;
    overflow: hidden;
    white-space: nowrap;
}

.thumb-logo {
    display: flex;
    align-items: center;
    justify-content: center;
    width: 77px;
    height: 79px;
    margin: 9px auto 0;
    background-color: #ffa500;
}

.thumb-figures {
    width: 64px;
    height: 56px;
    fill: #120c06;
}

.thumb-title,
.thumb-sub {
    display: flex;
    justify-content: center;
    filter: blur(0.5px);
}

.thumb-title {
    margin-top: 11px;
    color: #fff2d9;
    font-size: 18px;
    font-weight: 700;
    line-height: 24px;
}

.thumb-sub {
    margin-left: -14px;
    color: #fbd9a0;
    font-size: 15.400px;
    font-weight: 500;
    line-height: 18px;
}

.thumb-title + .thumb-sub {
    margin-top: 11px;
}

.message {
    padding: 13px 0 0 12px;
    font-size: 32px;
    letter-spacing: -0.17px;
    line-height: 50px;
    white-space: nowrap;
}

.bubble-second .message {
    padding-top: 0;
}

.emoji-poop {
    width: 38px;
    height: 36px;
    margin: 0 6px;
    vertical-align: -4px;
}

.time {
    position: absolute;
    right: 15px;
    bottom: 2px;
    color: #9ba3a8;
    font-size: 27.400px;
    line-height: 34px;
}

.reactions {
    position: relative;
    display: flex;
    align-items: center;
    box-sizing: border-box;
    width: 134px;
    height: 50px;
    margin: -8px 0 0 18px;
    padding-left: 12px;
    border: 2px solid #131c22;
    border-radius: 25px;
    background-color: #202c33;
}

.emoji-thumb {
    width: 34px;
    height: 36px;
}

.emoji-heart {
    width: 31px;
    height: 29px;
    margin-left: 11px;
}

.reaction-count {
    margin-left: 14px;
    color: #9ba3a8;
    font-size: 26px;
}

.composer {
    position: relative;
    display: flex;
    flex: none;
    align-items: flex-start;
    height: 72px;
    background-color: #202c33;
}

.composer-icon {
    flex: none;
}

.smile {
    width: 46px;
    height: 46px;
    margin: 40px 0 0 37px;
}

.clip {
    width: 40px;
    height: 46px;
    margin: 44px 0 0 40px;
}

.message-input {
    flex: none;
    box-sizing: border-box;
    width: 1300px;
    height: 90px;
    margin: 20px 0 0 39px;
    padding: 23px 0 0 34px;
    border-radius: 14px;
    background-color: #2a3942;
    color: #8696a0;
    font-size: 28.700px;
    line-height: 36px;
}
```
